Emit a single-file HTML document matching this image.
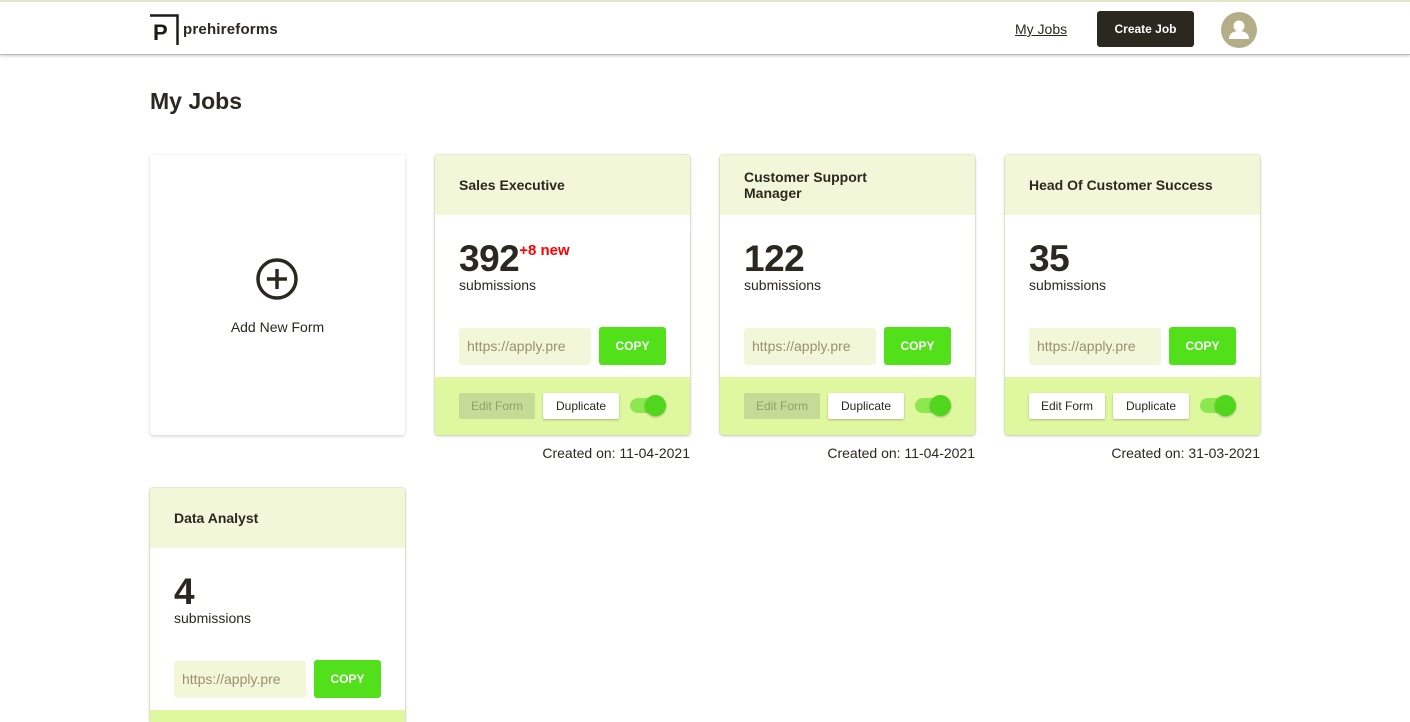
<!DOCTYPE html>
<html><head><meta charset="utf-8"><style>
*{box-sizing:border-box;margin:0;padding:0}
html,body{width:1410px;height:722px;overflow:hidden}
body{background:#fff;font-family:"Liberation Sans",sans-serif;color:#2b2820;position:relative}
.top{position:absolute;left:0;top:0;width:1410px;height:55px;border-top:2px solid #e2e6c6;border-bottom:1px solid #bbb;box-shadow:0 1px 3px rgba(0,0,0,.2);background:#fff}
.logo{position:absolute;left:150px;top:12px;width:30px;height:31px}
.brand{position:absolute;left:183px;top:19px;font-size:15px;font-weight:bold;color:#2b2820;letter-spacing:.2px}
.nav{position:absolute;left:1015px;top:19px;font-size:14px;text-decoration:underline;color:#2b2820}
.cj{position:absolute;left:1097px;top:9px;width:97px;height:36px;background:#2b2820;color:#fff;border-radius:3px;font-size:12px;font-weight:bold;text-align:center;line-height:36px}
.av{position:absolute;left:1221px;top:10px;width:36px;height:36px;border-radius:50%;background:#b3ae88;overflow:hidden}
h1{position:absolute;left:150px;top:88px;font-size:23px;font-weight:bold}
.card{position:absolute;width:255px;height:280px;background:#fff;border-radius:3px;box-shadow:0 1px 3px rgba(0,0,0,.2),0 0 0 1px #eef3d4;overflow:hidden}
.hd{height:60px;background:#f3f7d9;padding:0 24px;display:flex;align-items:center;font-size:14px;font-weight:bold;line-height:16px}
.num{position:absolute;left:24px;top:83px;font-size:37px;font-weight:bold;letter-spacing:-0.5px}
.num sup{font-size:15px;color:#f00;letter-spacing:0;vertical-align:top;position:relative;top:4px}
.sub{position:absolute;left:24px;top:122px;font-size:14px}
.url{position:absolute;left:24px;top:173px;width:132px;height:37px;background:#f3f7d9;border-radius:3px;color:#9a8f6e;font-size:14px;line-height:37px;padding-left:8px}
.copy{position:absolute;left:164px;top:172px;width:67px;height:38px;background:#52e01b;border-radius:3px;color:#fff;font-size:12px;font-weight:bold;text-align:center;line-height:38px}
.ft{position:absolute;left:0;top:222px;width:255px;height:58px;background:#dff8a0}
.ed{position:absolute;left:24px;top:16px;width:76px;height:26px;border-radius:2px;font-size:12px;text-align:center;line-height:26px;background:#c4da95;color:#8fa070}
.ed.on{background:#fff;color:#2b2820;box-shadow:0 1px 2px rgba(0,0,0,.25)}
.du{position:absolute;left:108px;top:16px;width:76px;height:26px;border-radius:2px;background:#fff;font-size:12px;text-align:center;line-height:26px;box-shadow:0 1px 2px rgba(0,0,0,.25)}
.tg{position:absolute;left:195px;top:21px;width:34px;height:15px;border-radius:8px;background:#8be84e}
.tg:after{content:"";position:absolute;right:-2px;top:-3px;width:21px;height:21px;border-radius:50%;background:#4fd61d;box-shadow:0 1px 2px rgba(0,0,0,.3)}
.date{position:absolute;font-size:14px;text-align:right;width:255px}
</style></head><body>
<div class="top">
<svg class="logo" viewBox="0 0 30 31"><path d="M0 1.5H27.5V31" fill="none" stroke="#1f1c16" stroke-width="2.5"/><text x="3" y="26" font-family="Liberation Sans" font-weight="bold" font-size="22" fill="#1f1c16">P</text></svg>
<div class="brand">prehireforms</div>
<div class="nav">My Jobs</div>
<div class="cj">Create Job</div>
<div class="av"><svg width="36" height="36" viewBox="0 0 36 36"><circle cx="18" cy="14" r="5.5" fill="#fff"/><path d="M8 27c0-6 5-8 10-8s10 2 10 8z" fill="#fff"/></svg></div>
</div>
<h1>My Jobs</h1>

<div class="card" style="left:150px;top:155px;box-shadow:0 1px 3px rgba(0,0,0,.2)">
<svg style="position:absolute;left:105px;top:102px" width="44" height="44" viewBox="0 0 44 44"><circle cx="22" cy="22" r="19" fill="none" stroke="#2b2820" stroke-width="3.5"/><path d="M22 12V32M12 22H32" stroke="#2b2820" stroke-width="3.5"/></svg>
<div style="position:absolute;left:0;width:255px;top:164px;text-align:center;font-size:14px">Add New Form</div>
</div>

<div class="card" style="left:435px;top:155px"><div class="hd">Sales Executive</div>
<div class="num">392<sup>+8 new</sup></div><div class="sub">submissions</div>
<div class="url">https://apply.pre</div><div class="copy">COPY</div>
<div class="ft"><div class="ed">Edit Form</div><div class="du">Duplicate</div><div class="tg"></div></div></div>
<div class="date" style="left:435px;top:445px">Created on: 11-04-2021</div>

<div class="card" style="left:720px;top:155px"><div class="hd">Customer Support<br>Manager</div>
<div class="num">122</div><div class="sub">submissions</div>
<div class="url">https://apply.pre</div><div class="copy">COPY</div>
<div class="ft"><div class="ed">Edit Form</div><div class="du">Duplicate</div><div class="tg"></div></div></div>
<div class="date" style="left:720px;top:445px">Created on: 11-04-2021</div>

<div class="card" style="left:1005px;top:155px"><div class="hd">Head Of Customer Success</div>
<div class="num">35</div><div class="sub">submissions</div>
<div class="url">https://apply.pre</div><div class="copy">COPY</div>
<div class="ft"><div class="ed on">Edit Form</div><div class="du">Duplicate</div><div class="tg"></div></div></div>
<div class="date" style="left:1005px;top:445px">Created on: 31-03-2021</div>

<div class="card" style="left:150px;top:488px;height:234px;border-radius:3px 3px 0 0"><div class="hd">Data Analyst</div>
<div class="num">4</div><div class="sub">submissions</div>
<div class="url">https://apply.pre</div><div class="copy">COPY</div>
<div class="ft" style="height:12px"></div></div>
</body></html>
